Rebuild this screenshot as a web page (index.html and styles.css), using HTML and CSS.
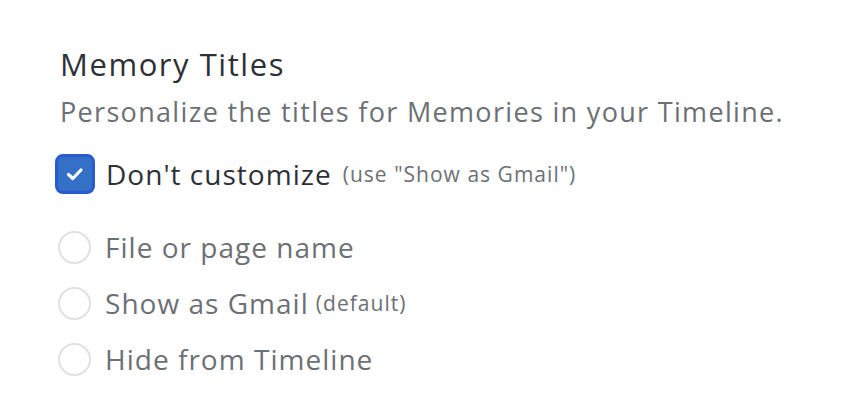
FILE: index.html
```html
<!DOCTYPE html>
<html>
<head>
<meta charset="utf-8">
<link rel="stylesheet" href="styles.css">
</head>
<body>
<section class="panel">
  <h1 class="title">Memory Titles</h1>
  <p class="subtitle">Personalize the titles for Memories in your Timeline.</p>
  <div class="row row-check">
    <span class="checkbox">
      <svg width="20" height="20" viewBox="0 0 20 20"><path d="M3.5 10.5 L7.8 14.5 L16 6" fill="none" stroke="#fff" stroke-width="3.2" stroke-linecap="round" stroke-linejoin="round"/></svg>
    </span>
    <span class="label-dark">Don't customize</span>
    <span class="note">(use "Show as Gmail")</span>
  </div>
  <div class="options">
    <div class="row"><span class="radio"></span><span class="label">File or page name</span></div>
    <div class="row"><span class="radio"></span><span class="label">Show as Gmail</span><span class="note-inline">(default)</span></div>
    <div class="row"><span class="radio"></span><span class="label">Hide from Timeline</span></div>
  </div>
</section>
</body>
</html>
```
FILE: styles.css
```css
* { box-sizing: border-box; }
body {
  margin: 0;
  background: #fff;
  font-family: "Open Sans", sans-serif;
  letter-spacing: 0.064em;
}
.panel {
  padding: 44px 0 0 60px;
}
.title {
  margin: 0;
  font-size: 31px;
  font-weight: 400;
  color: #2d3136;
  line-height: 40px;
  letter-spacing: 0.05em;
}
.subtitle {
  margin: 12px 0 0;
  font-size: 27px;
  color: #6c7075;
  line-height: 32px;
  letter-spacing: 0.049em;
}
.row {
  display: flex;
  align-items: center;
  height: 56px;
}
.row-check {
  margin: 24px 0 0 -5px;
  height: 44px;
}
.checkbox {
  width: 40px;
  height: 40px;
  border-radius: 8px;
  border: 3px solid #2a5ad2;
  background: #3470c6;
  display: flex;
  align-items: center;
  justify-content: center;
  margin-right: 11px;
}
.label-dark {
  font-size: 28px;
  color: #2d3136;
}
.note {
  font-size: 21px;
  color: #6c7075;
  margin-left: 11px;
}
.options {
  margin-top: 23px;
}
.options .row {
  margin-left: -2px;
}
.radio {
  width: 33px;
  height: 33px;
  border-radius: 50%;
  border: 2px solid #e0e1e2;
  margin-right: 14px;
}
.label {
  font-size: 28px;
  color: #6c7075;
}
.note-inline {
  font-size: 21px;
  color: #6c7075;
  margin-left: 7px;
}
```
